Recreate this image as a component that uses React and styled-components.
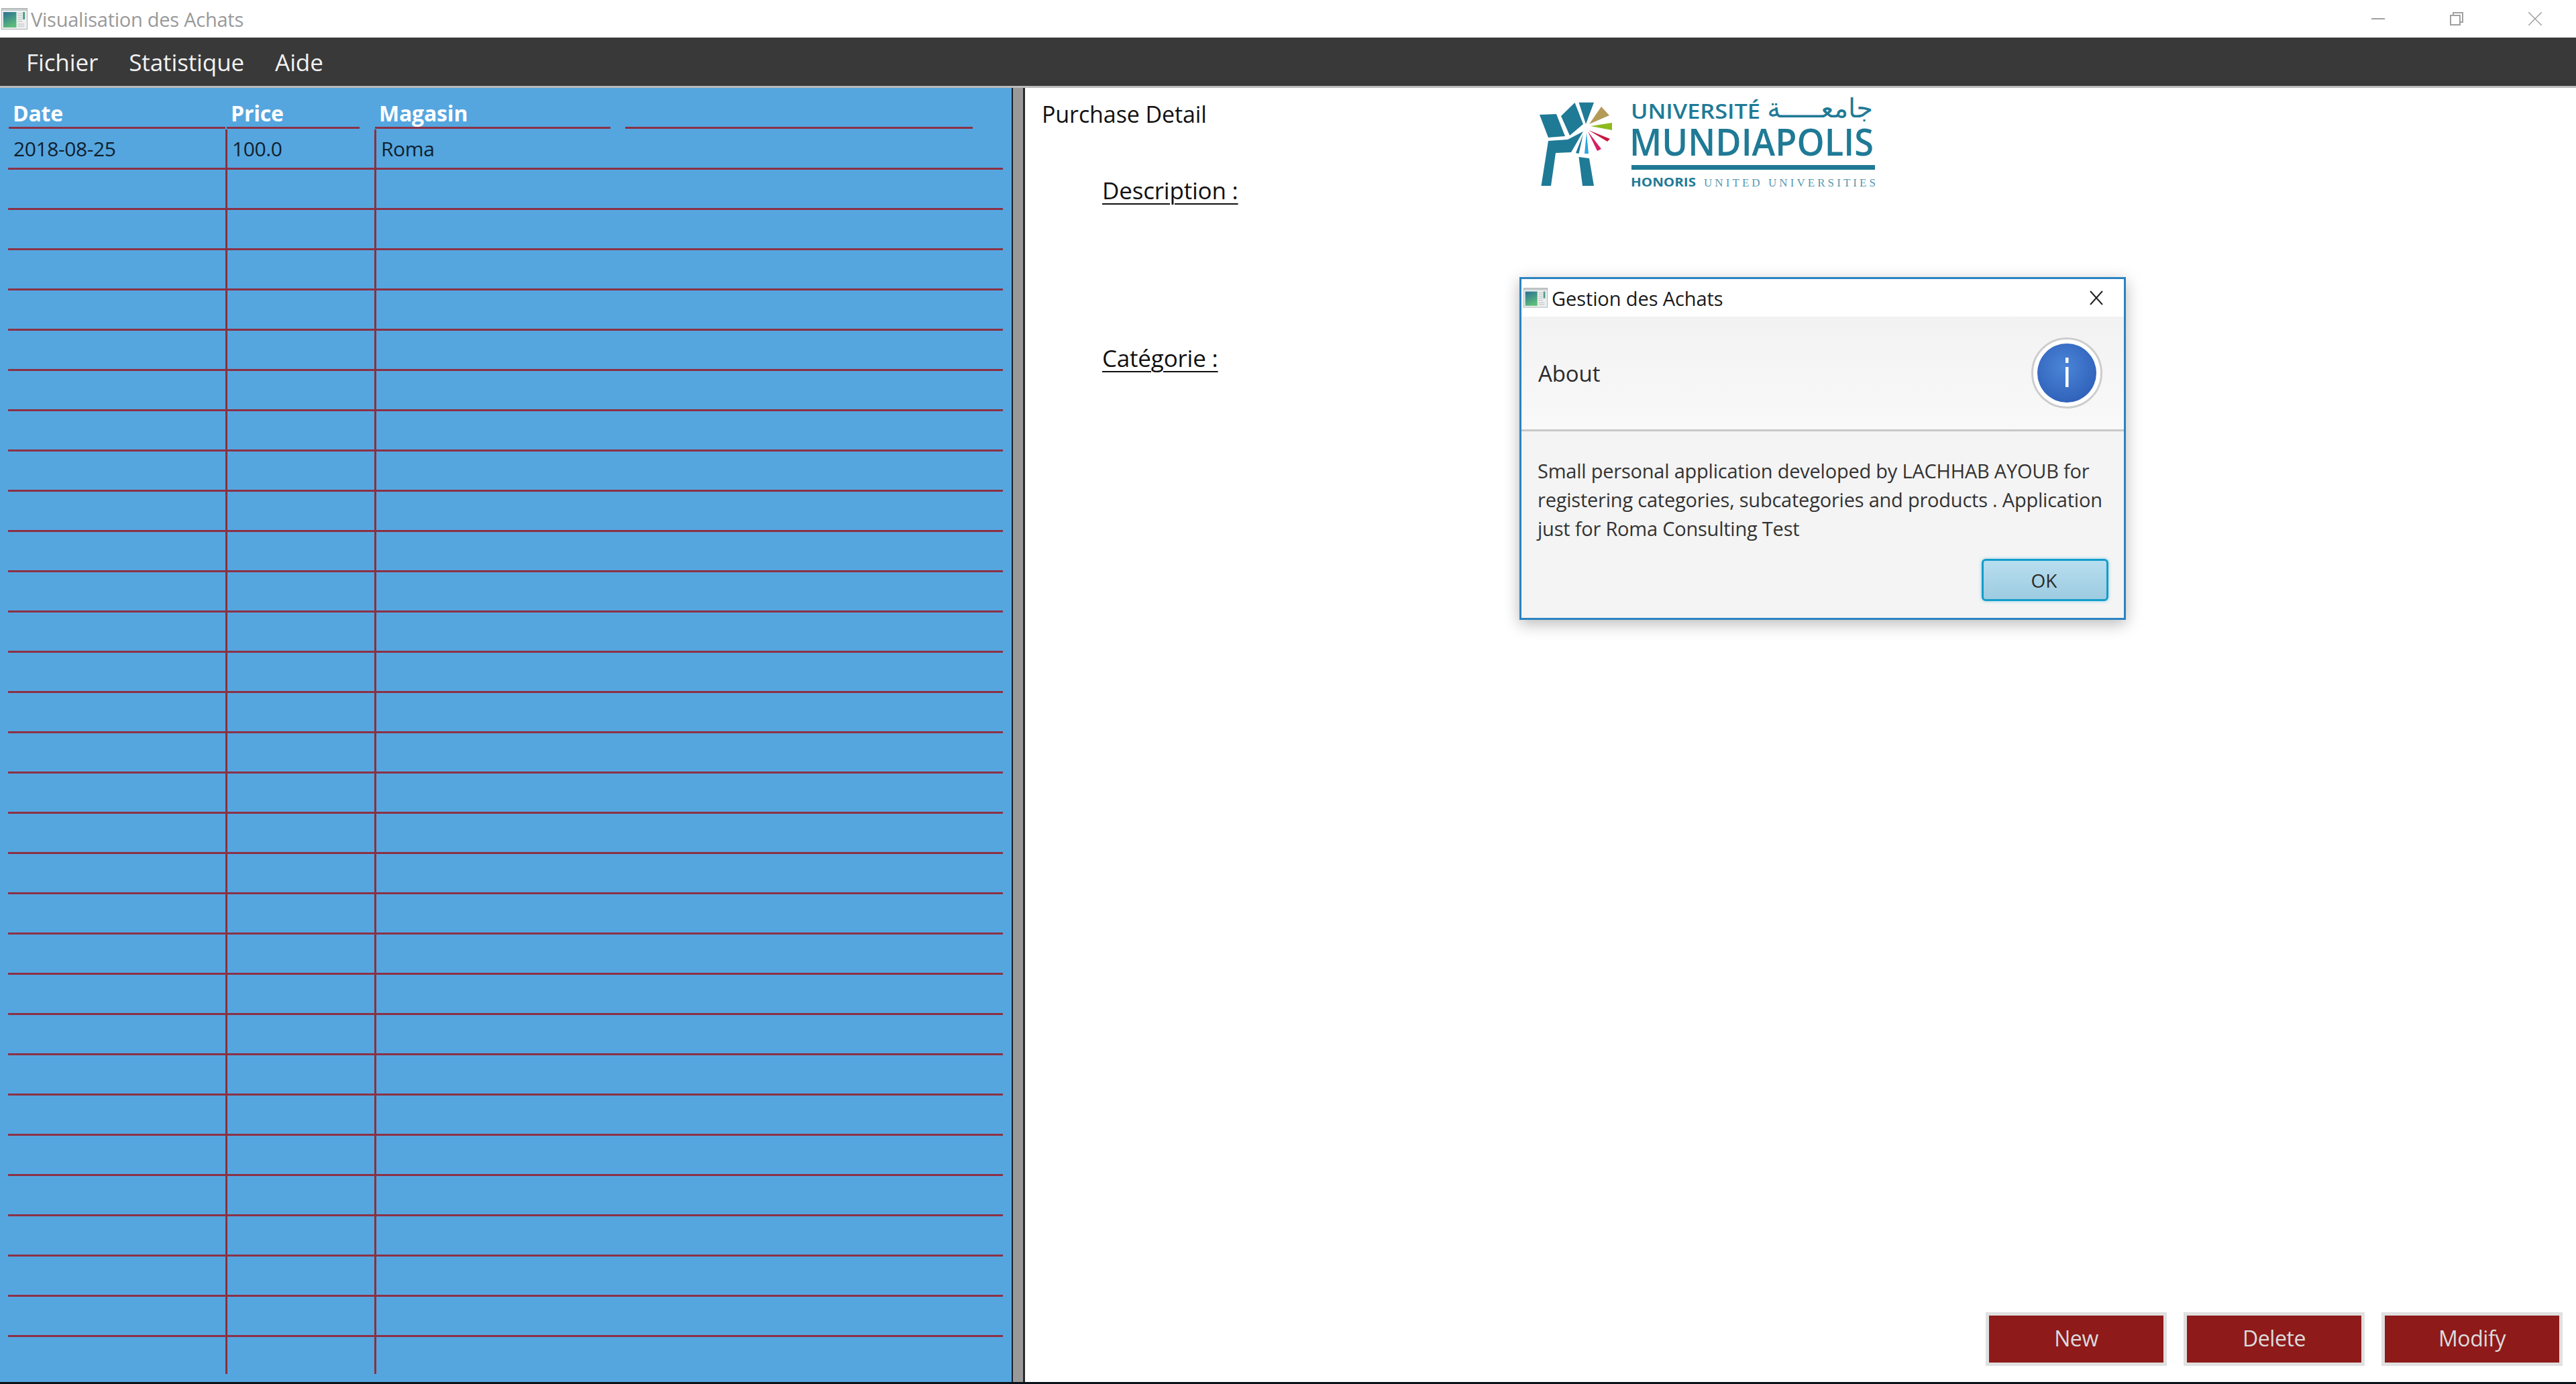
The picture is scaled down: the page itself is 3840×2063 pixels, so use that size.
import React from 'react'
import styled, { createGlobalStyle } from 'styled-components'

const GlobalStyle = createGlobalStyle`
html, body {
  margin: 0;
  padding: 0;
  background: #fff;
  overflow: hidden;
}
* { box-sizing: border-box; }
body { font-family: "Open Sans", "Liberation Sans", sans-serif; }
`

const Page = styled.div`
display: flex;
flex-direction: column;
height: 2063px;
width: 3840px;
position: relative;
`

const TitleBar = styled.div`
height: 56px;
display: flex;
align-items: center;
padding-left: 2px;
background: #fff;
`

const WindowTitle = styled.span`
margin-left: 5px;
font-size: 29px;
letter-spacing: -0.25px;
color: #999;
`

const WindowControls = styled.div`
margin-left: auto;
display: flex;
gap: 97px;
padding-right: 51px;
`

const MenuBar = styled.div`
height: 75px;
background: #393939;
border-bottom: 3px solid #bbb;
display: flex;
align-items: center;
padding-left: 39px;
gap: 46px;
`

const MenuItem = styled.span`
font-size: 35px;
letter-spacing: -0.1px;
color: #f2f2f2;
`

const Main = styled.div`
flex: 1;
display: flex;
min-height: 0;
`

const TablePanel = styled.div`
width: 1510px;
background: #55a6df;
border-right: 2px solid #16222e;
padding: 0 13px 0 12px;
`

const HeadRow = styled.div`
display: grid;
grid-template-columns: 324px 223px 349px 1fr;
height: 61px;
margin-bottom: 1px;
`

const HeadCell = styled.div`
font-size: 32px;
font-weight: 700;
letter-spacing: -0.2px;
color: #fff;
padding-left: 6px;
margin: 0 ${(p) => p.$gapRight || 0}px 0 ${(p) => p.$gapLeft || 0}px;
border-bottom: 3px solid #8b3145;
line-height: 40px;
padding-top: 18px;
`

const Row = styled.div`
display: grid;
grid-template-columns: 324px 222px 1fr;
height: ${(p) => (p.$last ? 55 : 60)}px;
border-bottom: ${(p) => (p.$last ? '0' : '3px solid #8b3145')};
`

const Cell = styled.div`
border-left: ${(p) => (p.$first ? '0' : '3px solid #8c2f3a')};
padding-left: ${(p) => (p.$first ? 8 : 7)}px;
font-size: 30px;
letter-spacing: -0.4px;
line-height: 57px;
color: #10202c;
`

const Splitter = styled.div`
width: 18px;
background: #999;
border-right: 3px solid #2b2b2b;
`

const DetailPanel = styled.div`
flex: 1;
display: flex;
flex-direction: column;
background: #fff;
`

const DetailTop = styled.div`
display: grid;
grid-template-columns: 732px auto;
`

const DetailTitle = styled.h1`
margin: 14px 0 0 25px;
font-size: 34px;
font-weight: 400;
letter-spacing: -0.1px;
line-height: 50px;
color: #111;
`

const Field = styled.div`
margin-left: 115px;
margin-top: ${(p) => p.$top}px;
font-size: 35px;
letter-spacing: -0.2px;
line-height: 50px;
color: #111;
text-decoration: underline;
text-underline-offset: 6px;
text-decoration-thickness: 2px;
`

const Actions = styled.div`
margin-top: auto;
display: flex;
justify-content: flex-end;
gap: 25px;
padding: 0 20px 24px 0;
`

const ActionButton = styled.button`
width: 270px;
height: 80px;
border: 5px solid #e0e0e0;
background: #8e1a1a;
color: #dcdcdc;
font-family: inherit;
font-size: 32px;
letter-spacing: -0.4px;
padding: 0 0 3px;
`

const BottomStrip = styled.div`
height: 3px;
background: #0c1219;
`

const Dialog = styled.div`
position: absolute;
left: 2265px;
top: 413px;
width: 904px;
height: 511px;
background: #f4f4f4;
border: 3px solid #2b82c2;
box-shadow: 0 6px 22px rgba(0, 0, 0, 0.28);
display: flex;
flex-direction: column;
`

const DialogTitleBar = styled.div`
height: 56px;
background: #fff;
display: flex;
align-items: center;
padding: 0 31px 0 3px;
`

const DialogTitle = styled.span`
margin-left: 6px;
font-size: 29px;
letter-spacing: -0.1px;
color: #1a1a1a;
`

const DialogClose = styled.span`
margin-left: auto;
display: flex;
`

const DialogHeader = styled.div`
height: 171px;
background: linear-gradient(#f2f2f2, #f9f9f9);
border-bottom: 3px solid #c8c8c8;
display: flex;
align-items: center;
justify-content: space-between;
padding: 0 32px 0 25px;
`

const DialogHeading = styled.span`
font-size: 33px;
letter-spacing: -0.1px;
color: #2b2b2b;
`

const DialogMessage = styled.p`
margin: 37px 24px 0;
font-size: 29px;
letter-spacing: -0.22px;
line-height: 43px;
color: #333;
white-space: nowrap;
`

const DialogActions = styled.div`
margin-top: auto;
display: flex;
justify-content: flex-end;
padding: 0 23px 25px 0;
`

const OkButton = styled.button`
width: 189px;
height: 63px;
border: 3px solid #139dcb;
border-radius: 6px;
background: linear-gradient(#b7deef, #9dcbe0);
box-shadow: 0 0 5px rgba(19, 157, 203, 0.45);
font-family: inherit;
font-size: 28px;
color: #2b2b2b;
padding: 0 3px 0 0;
`

const AppIcon = ({ size, id }) => (
  <svg width={size} height={size * 0.82} viewBox="0 0 40 32" preserveAspectRatio="none">
    <defs>
      <linearGradient id={id} x1="0" y1="0" x2="0.4" y2="1">
        <stop offset="0" stopColor="#2b6f96" />
        <stop offset="1" stopColor="#5cbb7a" />
      </linearGradient>
    </defs>
    <rect x="0.5" y="0.5" width="39" height="31" fill="#eef0f0" stroke="#a9afb0" />
    <rect x="1" y="1" width="38" height="3" fill="#c6cccd" />
    <rect x="3" y="6" width="20" height="23" fill={`url(#${id})`} />
    <path d="M25 8h7M25 11h7M25 14h7M25 17h7M25 20h7M25 24h10M25 27h10" stroke="#b8bcbc" />
    <rect x="33" y="6" width="3" height="11" fill="#4b9a8a" />
  </svg>
)

const ControlIcon = ({ children }) => (
  <svg width="20" height="20" viewBox="0 0 20 20" fill="none" stroke="#a0a0a0" strokeWidth="2">
    {children}
  </svg>
)

const CloseGlyph = () => (
  <svg width="20" height="22" viewBox="0 0 20 22" fill="none" stroke="#222" strokeWidth="2">
    <path d="M1 1L19 21M19 1L1 21" />
  </svg>
)

const InfoIcon = () => (
  <svg width="106" height="106" viewBox="0 0 106 106">
    <defs>
      <radialGradient id="infoFill" cx="0.45" cy="0.4" r="0.65">
        <stop offset="0" stopColor="#4a86d8" />
        <stop offset="1" stopColor="#2f5fb8" />
      </radialGradient>
    </defs>
    <circle cx="53" cy="53" r="51.5" fill="#fff" stroke="#cdcdcd" strokeWidth="3" />
    <circle cx="53" cy="53" r="44" fill="url(#infoFill)" />
    <rect x="51" y="30" width="4.5" height="8" fill="#fff" />
    <rect x="51" y="44" width="4.5" height="30" fill="#fff" />
  </svg>
)

const LogoSvg = styled.svg`
display: block;
`

const Logo = () => (
  <LogoSvg width="560" height="160" viewBox="0 11 560 160">
    <g fill="#1f7a96">
      <polygon points="35,51 60,50 73,83 48,85" />
      <polygon points="67,53 87.5,33 100,65 80,82" />
      <polygon points="93.5,32.7 116,32.7 104,65" />
      <polygon points="48,90 77,88 100,76 82,107 59,108 52,157 37.5,157" />
      <polygon points="93.5,114 109,116 116,157 99,157" />
      <polygon points="100,80 93.5,109 89,108" />
    </g>
    <polygon points="109,65 127,39 139,52" fill="#b39a58" />
    <polygon points="111,68 143,63 143,74" fill="#8dbb1c" />
    <polygon points="108,74 140,87 136,91" fill="#c9173f" />
    <polygon points="107,76 127,102 121,105" fill="#d81d62" />
    <polygon points="105,78 108,109 102,109" fill="#2aa5e0" />
    <g fill="#1f7a96" fontFamily='"Open Sans", sans-serif'>
      <text x="171" y="57" fontSize="31" fontWeight="600" textLength="193" lengthAdjust="spacingAndGlyphs">UNIVERSITÉ</text>
      <text x="169" y="112" fontSize="56" fontWeight="600" textLength="364" lengthAdjust="spacingAndGlyphs">MUNDIAPOLIS</text>
      <rect x="172" y="126" width="363" height="7" />
      <text x="171" y="158" fontSize="17" fontWeight="700" textLength="97" lengthAdjust="spacingAndGlyphs">HONORIS</text>
      <text x="280" y="158" fontSize="17" fontFamily='"Liberation Serif", serif' textLength="256" lengthAdjust="spacing" fillOpacity="0.8">UNITED UNIVERSITIES</text>
      <text x="532" y="55" fontSize="40" direction="rtl" fontFamily='"DejaVu Sans", sans-serif'>جامعـــــة</text>
    </g>
  </LogoSvg>
)

const rows = Array.from({ length: 31 }, (_, i) =>
  i === 0 ? ['2018-08-25', '100.0', 'Roma'] : ['', '', '']
)

const App = () => {
  return (
    <Page>
      <GlobalStyle />
      <TitleBar>
        <AppIcon size={39} id="windowIcon" />
        <WindowTitle>Visualisation des Achats</WindowTitle>
        <WindowControls>
          <ControlIcon><path d="M0 10H20" /></ControlIcon>
          <ControlIcon><path d="M1 5H15V19H1ZM5 5V1H19V15H15" /></ControlIcon>
          <ControlIcon><path d="M0 0L20 20M20 0L0 20" strokeWidth="1.5" /></ControlIcon>
        </WindowControls>
      </TitleBar>
      <MenuBar>
        <MenuItem>Fichier</MenuItem>
        <MenuItem>Statistique</MenuItem>
        <MenuItem>Aide</MenuItem>
      </MenuBar>
      <Main>
        <TablePanel>
          <HeadRow>
            <HeadCell $gapLeft={1}>Date</HeadCell>
            <HeadCell $gapLeft={2} $gapRight={23}>Price</HeadCell>
            <HeadCell $gapRight={-2}>Magasin</HeadCell>
            <HeadCell $gapLeft={24} $gapRight={45} />
          </HeadRow>
          {rows.map((r, i) => (
            <Row key={i} $last={i === rows.length - 1}>
              <Cell $first>{r[0]}</Cell>
              <Cell>{r[1]}</Cell>
              <Cell>{r[2]}</Cell>
            </Row>
          ))}
        </TablePanel>
        <Splitter />
        <DetailPanel>
          <DetailTop>
            <DetailTitle>Purchase Detail</DetailTitle>
            <Logo />
          </DetailTop>
          <Field $top={-32}>Description :</Field>
          <Field $top={200}>Catégorie :</Field>
          <Actions>
            <ActionButton>New</ActionButton>
            <ActionButton>Delete</ActionButton>
            <ActionButton>Modify</ActionButton>
          </Actions>
        </DetailPanel>
      </Main>
      <BottomStrip />
      <Dialog>
        <DialogTitleBar>
          <AppIcon size={36} id="dialogIcon" />
          <DialogTitle>Gestion des Achats</DialogTitle>
          <DialogClose><CloseGlyph /></DialogClose>
        </DialogTitleBar>
        <DialogHeader>
          <DialogHeading>About</DialogHeading>
          <InfoIcon />
        </DialogHeader>
        <DialogMessage>
          Small personal application developed by LACHHAB AYOUB for<br />
          registering categories, subcategories and products . Application<br />
          just for Roma Consulting Test
        </DialogMessage>
        <DialogActions>
          <OkButton>OK</OkButton>
        </DialogActions>
      </Dialog>
    </Page>
  )
}

export default App
